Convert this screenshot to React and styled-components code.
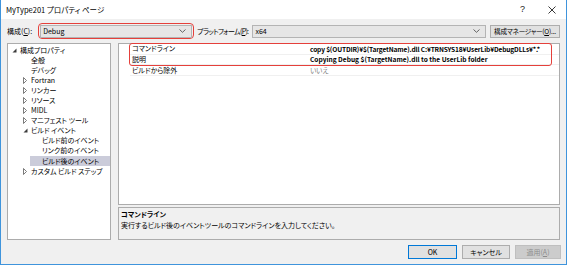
import React from "react";
import styled, { createGlobalStyle } from "styled-components";

const FONT = `"Noto Sans CJK JP", "Noto Sans", sans-serif`;

const Global = createGlobalStyle`
  html, body { margin: 0; padding: 0; background: #ffffff; }
  body { width: 567px; height: 265px; overflow: hidden; }
  * { box-sizing: border-box; }
`;

const Window = styled.div`
  width: 567px;
  height: 265px;
  border: 1px solid #3f94dc;
  border-top: none;
  background: #f0f0f0;
  display: flex;
  flex-direction: column;
  font-family: ${FONT};
  font-size: 7px;
  font-feature-settings: "palt";
  color: #000;
  line-height: 1;
  white-space: nowrap;
`;

const TitleBar = styled.div`
  height: 19px;
  background: #ffffff;
  display: flex;
  align-items: center;
  padding-left: 5px;
`;

const Title = styled.div`
  flex: 1;
  font-size: 7.5px;
  color: #000;
`;

const TitleButton = styled.div`
  width: 29px;
  height: 19px;
  display: flex;
  align-items: center;
  justify-content: center;
  font-size: 9px;
  color: #222;
  font-family: "Liberation Sans", sans-serif;
`;

const Body = styled.div`
  flex: 1;
  display: flex;
  flex-direction: column;
  padding: 4px 6px 0 6px;
`;

const TopRow = styled.div`
  height: 16px;
  display: flex;
  align-items: center;
`;

const Label = styled.div`
  flex: none;
  margin-left: ${(p) => p.$ml || 0}px;
  margin-right: ${(p) => p.$mr || 0}px;
  letter-spacing: ${(p) => p.$ls || 0}px;
  color: #000;
`;

const U = styled.span`
  text-decoration: underline;
`;

const RedFrame = styled.div`
  width: 156px;
  flex: none;
  height: 16px;
  border: 1.5px solid #e5403b;
  border-radius: 4px;
  padding: 0.5px 1px;
  display: flex;
`;

const Combo = styled.div`
  flex: 1;
  height: 13px;
  background: #e6e6e6;
  border: 1px solid #b4b4b4;
  display: flex;
  align-items: center;
  padding: 0 5px 0 2px;
`;

const ComboText = styled.span`
  flex: 1;
`;

const Button = styled.div`
  width: ${(p) => p.$w}px;
  flex: none;
  height: ${(p) => p.$h || 14}px;
  margin-left: ${(p) => p.$ml || 0}px;
  background: ${(p) => (p.$disabled ? "#cccccc" : "#e1e1e1")};
  border: 1px solid
    ${(p) => (p.$default ? "#0078d7" : p.$disabled ? "#bfbfbf" : "#adadad")};
  color: ${(p) => (p.$disabled ? "#8c8c8c" : "#000")};
  font-size: ${(p) => p.$fs || 7}px;
  letter-spacing: ${(p) => p.$ls || 0}px;
  display: flex;
  align-items: center;
  justify-content: center;
`;

const Main = styled.div`
  margin-top: 4px;
  height: 197px;
  display: flex;
`;

const TreePanel = styled.div`
  width: 104px;
  background: #ffffff;
  border: 1px solid #acacac;
  padding-top: 1px;
  display: flex;
  flex-direction: column;
  overflow: hidden;
`;

const TreeRow = styled.div`
  height: 10.1px;
  flex: none;
  display: flex;
  padding-left: ${(p) => p.$level * 11}px;
`;

const TreeItem = styled.div`
  flex: 1;
  display: flex;
  align-items: center;
  background: ${(p) => (p.$selected ? "#cbccda" : "transparent")};
`;

const Expander = styled.div`
  width: 12px;
  flex: none;
  display: flex;
  align-items: center;
  justify-content: center;
`;

const RightColumn = styled.div`
  flex: 1;
  margin-left: 7px;
  display: flex;
  flex-direction: column;
`;

const Grid = styled.div`
  height: 162px;
  background: #ffffff;
  border: 1px solid #acacac;
  padding-left: 11px;
  display: flex;
  flex-direction: column;
`;

const Marked = styled.div`
  position: relative;
  &::after {
    content: "";
    position: absolute;
    top: -1px;
    left: -1px;
    right: 7px;
    bottom: -0.5px;
    border: 1.5px solid #e5403b;
    border-radius: 3px;
    pointer-events: none;
  }
`;

const GridRow = styled.div`
  height: 10.7px;
  display: grid;
  grid-template-columns: 176px 1fr;
  align-items: center;
  border-bottom: 1px solid #f0f0f0;
`;

const NameCell = styled.div`
  padding-left: 2px;
`;

const ValueCell = styled.div`
  padding-left: 4px;
  font-size: 6.6px;
  letter-spacing: ${(p) => p.$ls || 0}px;
  font-weight: ${(p) => (p.$bold ? 700 : 400)};
  color: ${(p) => (p.$muted ? "#7a7a7a" : "#000")};
`;

const DescPanel = styled.div`
  margin-top: 2px;
  flex: 1;
  background: #f0f0f0;
  border: 1px solid #acacac;
  padding: 2px 2px;
  display: flex;
  flex-direction: column;
  gap: 1px;
`;

const DescTitle = styled.div`
  font-weight: 700;
  height: 9px;
  line-height: 9px;
`;

const DescText = styled.div`
  height: 10px;
  line-height: 10px;
`;

const Footer = styled.div`
  margin-top: 5px;
  height: 14px;
  display: flex;
  justify-content: flex-end;
  gap: 5px;
  margin-right: -1px;
`;

const Chevron = () => (
  <svg width="7" height="4" viewBox="0 0 7 4">
    <polyline points="0.5,0.5 3.5,3.3 6.5,0.5" fill="none" stroke="#555" strokeWidth="0.9" />
  </svg>
);

const ExpandedIcon = () => (
  <svg width="5" height="5" viewBox="0 0 5 5">
    <polygon points="4.5,0.5 4.5,4.5 0.5,4.5" fill="#3c3c3c" />
  </svg>
);

const CollapsedIcon = () => (
  <svg width="4" height="7" viewBox="0 0 4 7">
    <polygon points="0.5,0.5 3.5,3.5 0.5,6.5" fill="none" stroke="#5a5a5a" strokeWidth="0.8" />
  </svg>
);

const CloseIcon = () => (
  <svg width="8" height="8" viewBox="0 0 8 8">
    <line x1="0.5" y1="0.5" x2="7.5" y2="7.5" stroke="#222" strokeWidth="0.9" />
    <line x1="7.5" y1="0.5" x2="0.5" y2="7.5" stroke="#222" strokeWidth="0.9" />
  </svg>
);

const tree = [
  { label: "構成プロパティ", level: 0, icon: "open" },
  { label: "全般", level: 1 },
  { label: "デバッグ", level: 1 },
  { label: "Fortran", level: 1, icon: "closed" },
  { label: "リンカー", level: 1, icon: "closed" },
  { label: "リソース", level: 1, icon: "closed" },
  { label: "MIDL", level: 1, icon: "closed" },
  { label: "マニフェスト ツール", level: 1, icon: "closed" },
  { label: "ビルド イベント", level: 1, icon: "open" },
  { label: "ビルド前のイベント", level: 2 },
  { label: "リンク前のイベント", level: 2 },
  { label: "ビルド後のイベント", level: 2, selected: true },
  { label: "カスタム ビルド ステップ", level: 1, icon: "closed" },
];

export default function App() {
  return (
    <>
      <Global />
      <Window>
        <TitleBar>
          <Title>MyType201 プロパティ ページ</Title>
          <TitleButton>?</TitleButton>
          <TitleButton>
            <CloseIcon />
          </TitleButton>
        </TitleBar>
        <Body>
          <TopRow>
            <Label $mr={6}>
              構成(<U>C</U>):
            </Label>
            <RedFrame>
              <Combo>
                <ComboText>Debug</ComboText>
                <Chevron />
              </Combo>
            </RedFrame>
            <Label $ml={3} $mr={4} $ls={-0.65}>
              プラットフォーム(<U>P</U>):
            </Label>
            <Combo>
              <ComboText>x64</ComboText>
              <Chevron />
            </Combo>
            <Button $w={70} $h={13} $ml={4} $fs={6.6} $ls={-0.2}>
              構成マネージャー(<U>O</U>)...
            </Button>
          </TopRow>
          <Main>
            <TreePanel>
              {tree.map((t) => (
                <TreeRow key={t.label} $level={t.level}>
                  <TreeItem $selected={t.selected}>
                    <Expander>
                      {t.icon === "open" && <ExpandedIcon />}
                      {t.icon === "closed" && <CollapsedIcon />}
                    </Expander>
                    <span>{t.label}</span>
                  </TreeItem>
                </TreeRow>
              ))}
            </TreePanel>
            <RightColumn>
              <Grid>
                <Marked>
                  <GridRow>
                    <NameCell>コマンドライン</NameCell>
                    <ValueCell $bold $ls={-0.15}>
                      copy $(OUTDIR)¥$(TargetName).dll C:¥TRNSYS18¥UserLib¥DebugDLLs¥*.*
                    </ValueCell>
                  </GridRow>
                  <GridRow>
                    <NameCell>説明</NameCell>
                    <ValueCell $bold>
                      Copying Debug $(TargetName).dll to the UserLib folder
                    </ValueCell>
                  </GridRow>
                </Marked>
                <GridRow>
                  <NameCell>ビルドから除外</NameCell>
                  <ValueCell $muted>いいえ</ValueCell>
                </GridRow>
              </Grid>
              <DescPanel>
                <DescTitle>コマンドライン</DescTitle>
                <DescText>
                  実行するビルド後のイベントツールのコマンドラインを入力してください。
                </DescText>
              </DescPanel>
            </RightColumn>
          </Main>
          <Footer>
            <Button $w={49} $default>
              OK
            </Button>
            <Button $w={48}>キャンセル</Button>
            <Button $w={46} $disabled>
              適用(<U>A</U>)
            </Button>
          </Footer>
        </Body>
      </Window>
    </>
  );
}
